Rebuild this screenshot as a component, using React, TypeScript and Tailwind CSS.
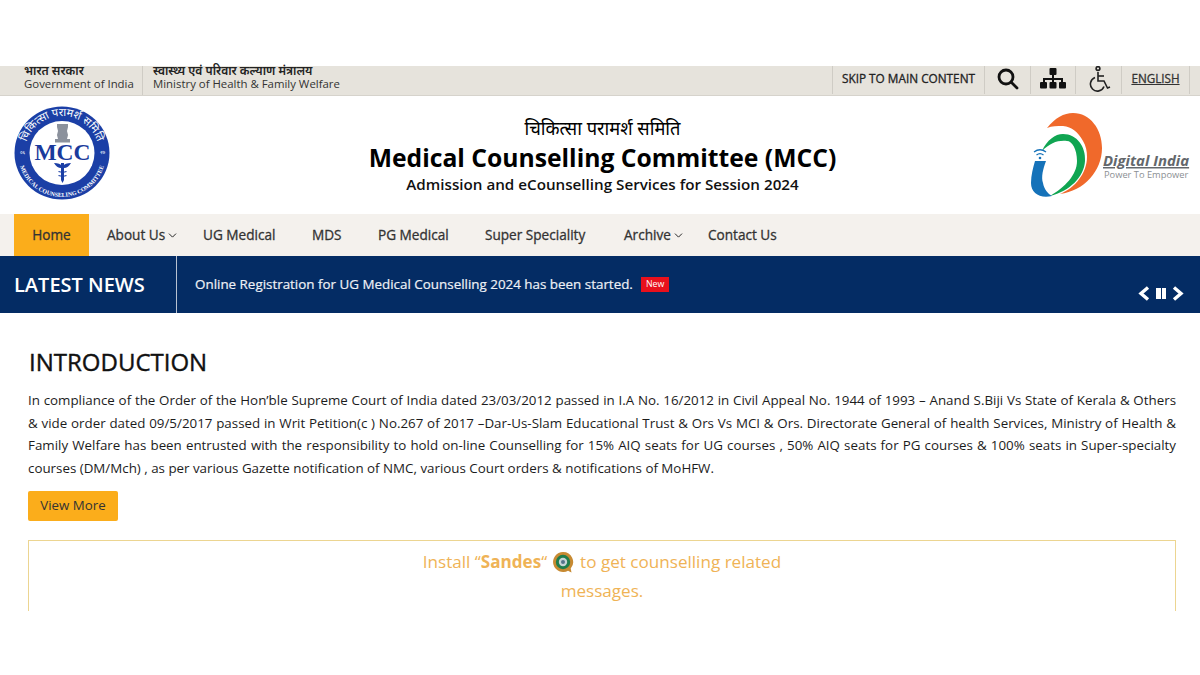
import { ChevronDown } from "lucide-react";

const navItems = [
  { label: "About Us", caret: true, cls: "ml-[18px] w-[96px]" },
  { label: "UG Medical", cls: "w-[109px]" },
  { label: "MDS", cls: "w-[66px]" },
  { label: "PG Medical", cls: "w-[107px]" },
  { label: "Super Speciality", cls: "w-[139px]" },
  { label: "Archive", caret: true, cls: "w-[84px]" },
  { label: "Contact Us", cls: "w-[80px]" },
];

function MccLogo() {
  return (
    <svg width="98" height="96" viewBox="0 0 98 96">
      <defs>
        <path id="mcc-top" d="M12 48 A37 37 0 0 1 86 48" />
        <path id="mcc-bottom" d="M5 48 A44 44 0 0 0 93 48" />
      </defs>
      <ellipse cx="49" cy="48" rx="47.500" ry="46.500" fill="#1b3fa6" />
      <ellipse cx="49" cy="48" rx="32.500" ry="32" fill="#fff" />
      <text fontSize="11" fill="#fff" fontFamily="'Noto Sans', 'Open Sans', sans-serif">
        <textPath href="#mcc-top" startOffset="50%" textAnchor="middle">
          चिकित्सा परामर्श समिति
        </textPath>
      </text>
      <text fontSize="6" fontWeight="700" fill="#fff" fontFamily="'Liberation Serif', serif">
        <textPath href="#mcc-bottom" startOffset="50%" textAnchor="middle">
          MEDICAL COUNSELING COMMITTEE
        </textPath>
      </text>
      <path d="M44 19h11v3l-1 4 1 4-1 4h3v3.500H42V34h3l-1-4 1-4-1-4z" fill="#8b919c" />
      <text x="49.500" y="54.500" textAnchor="middle" fontSize="23.500" fontWeight="700" fill="#1a3a9c" fontFamily="'Liberation Serif', serif">
        MCC
      </text>
      <path d="M48 58h3v17l-1.500 3-1.500-3z" fill="#1b3fa6" />
      <path d="M41 58c4 0 6.500 1 8.500 3 2-2 4.500-3 8.500-3-1.500 3-4.500 5-7 5l-1.500 1.500L48 63c-2.500 0-5.500-2-7-5z" fill="#1b3fa6" />
      <path d="M45.500 66.500c3 1 5.500 1 8 0M45.500 70.500c3 1 5.500 1 8 0" stroke="#1b3fa6" strokeWidth="1.200" fill="none" />
      <text x="9.500" y="49" textAnchor="middle" fontSize="5" fill="#fff" fontFamily="'Noto Sans', 'Open Sans', sans-serif">०६</text>
      <text x="89.500" y="49" textAnchor="middle" fontSize="5" fill="#fff" fontFamily="'Noto Sans', 'Open Sans', sans-serif">२७</text>
    </svg>
  );
}

function DigitalIndiaLogo() {
  return (
    <svg width="164" height="88" viewBox="0 0 164 88">
      <path d="M19 17C27 7 36 2 45 2c17 0 29 16 29 35 0 23-18 43-42 46 15-6 27-21 27-37 0-6-1-11-4-16-5-9-11-14-20-15-6 0-11 0-16 2z" fill="#f0692b" />
      <path d="M14 40c5-11 13-17 21-17 14 0 23 13 22 27-1 16-15 30-35 35 15-9 27-21 27-35 0-12-5-20-10-20-9-1-17 2-25 10z" fill="#10a552" />
      <path d="M7 50h11c-3 8-5 16-3 22 1 6 5 11 9 13C12 88 3 82 3 72c0-8 2-15 4-22z" fill="#1572b9" />
      <path d="M6 41c4-3 8-3 12 0M8.500 44c2.500-2 4.500-2 7 0" stroke="#1572b9" strokeWidth="1.300" fill="none" />
      <circle cx="12" cy="47" r="1.300" fill="#1572b9" />
      <text x="75" y="55" fontSize="14.900" fontWeight="700" fontStyle="italic" fill="#63676b" fontFamily="'Open Sans', sans-serif" textDecoration="underline">
        Digital India
      </text>
      <text x="76" y="67" fontSize="9.300" fill="#8b8f93" fontFamily="'Open Sans', sans-serif">
        Power To Empower
      </text>
    </svg>
  );
}

function SitemapIcon() {
  return (
    <svg width="26" height="21" viewBox="0 0 26 21" fill="#111">
      <rect x="9.500" y="0" width="7" height="7" rx="1" />
      <path d="M12 7h2v3h9v4h-2v-2h-7v2h-2v-2H5v2H3v-4h9z" />
      <rect x="0" y="14" width="7" height="6.500" rx="1" />
      <rect x="9.500" y="14" width="7" height="6.500" rx="1" />
      <rect x="19" y="14" width="7" height="6.500" rx="1" />
    </svg>
  );
}

function WheelchairIcon() {
  return (
    <svg width="24" height="26" viewBox="0 0 24 26" fill="none" stroke="#222" strokeWidth="1.600">
      <circle cx="11" cy="2.500" r="1.900" />
      <path d="M11 6v9h6l3.500 7 2.500-1" />
      <path d="M11 10h6" />
      <path d="M8 11.500a7 7 0 1 0 9 9" />
    </svg>
  );
}

function SandesIcon() {
  return (
    <svg width="22" height="23" viewBox="0 0 22 23" className="mr-[2px] inline-block align-[-6px]">
      <path d="M11 1a10 10 0 1 0 5 18.700l3.500 1.800-.8-4A10 10 0 0 0 11 1z" fill="#c78a32" />
      <circle cx="11" cy="11" r="7.200" fill="#1f7d4d" />
      <circle cx="11" cy="11" r="4.200" fill="#c6d4d6" />
      <circle cx="11" cy="11" r="2" fill="#54748c" />
    </svg>
  );
}

export default function App() {
  return (
    <div className="h-[675px] w-[1200px] overflow-hidden bg-white pt-[66px] font-['Open_Sans','Noto_Sans',sans-serif] text-[#222]">
      {/* gov strip */}
      <div className="flex h-[30px] items-stretch border-b border-[#d6d3cc] bg-[#e6e3dc] text-[11.400px] leading-[13px]">
        <div className="flex w-[143px] flex-col justify-center border-r border-[#cfccc5] pb-[7px] pl-[24px]">
          <span className="text-[12px] font-semibold text-[#222]">भारत सरकार</span>
          <span className="text-[#333]">Government of India</span>
        </div>
        <div className="flex flex-col justify-center pb-[7px] pl-[10px]">
          <span className="text-[12px] font-semibold text-[#222]">स्वास्थ्य एवं परिवार कल्याण मंत्रालय</span>
          <span className="text-[#333]">Ministry of Health &amp; Family Welfare</span>
        </div>
        <div className="ml-auto flex items-stretch pb-[1px]">
          <div className="flex w-[153px] items-center justify-center border-x border-[#cfccc5] pb-[3px] text-[11.800px] text-[#222] [-webkit-text-stroke:0.3px_#222]">
            SKIP TO MAIN CONTENT
          </div>
          <div className="flex w-[46px] items-center justify-center border-r border-[#cfccc5] pb-[3px]">
            <svg width="22" height="22" viewBox="0 0 22 22" fill="none" stroke="#111" strokeWidth="2.800" strokeLinecap="round">
              <circle cx="9" cy="9" r="7" />
              <path d="M14.500 14.500 20 20" />
            </svg>
          </div>
          <div className="flex w-[45px] items-center justify-center border-r border-[#cfccc5] pb-[3px]">
            <SitemapIcon />
          </div>
          <div className="flex w-[46px] items-center justify-center border-r border-[#cfccc5] pb-[3px]">
            <WheelchairIcon />
          </div>
          <div className="flex w-[68px] items-center justify-center border-r border-[#cfccc5] pb-[3px] text-[11.700px] text-[#333] underline [-webkit-text-stroke:0.3px_#333]">
            ENGLISH
          </div>
          <div className="w-[10px]" />
        </div>
      </div>

      {/* header */}
      <div className="flex h-[118px] items-center justify-between bg-white pr-[8px] pl-[13px]">
        <div className="pb-[4px]">
          <MccLogo />
        </div>
        <div className="flex flex-col items-center pl-[66px] text-black">
          <div className="text-[18.300px] leading-[26px]">चिकित्सा परामर्श समिति</div>
          <div className="mt-[2px] text-[24.700px] leading-[30px] font-bold">Medical Counselling Committee (MCC)</div>
          <div className="mt-[1px] pb-[1px] text-[15.200px] leading-[20px] font-semibold text-[#111]">
            Admission and eCounselling Services for Session 2024
          </div>
        </div>
        <DigitalIndiaLogo />
      </div>

      {/* nav */}
      <div className="flex h-[42px] items-stretch bg-[#f4f1ed] pl-[14px] text-[13.600px] whitespace-nowrap text-[#333] [-webkit-text-stroke:0.3px_#333]">
        <div className="flex w-[75px] items-center justify-center bg-[#fbad1b]">Home</div>
        {navItems.map((item) => (
          <div key={item.label} className={`flex items-center ${item.cls}`}>
            {item.label}
            {item.caret && <ChevronDown size={13} strokeWidth={1.800} className="mt-[1px] ml-[1px] text-[#222]" />}
          </div>
        ))}
      </div>

      {/* latest news */}
      <div className="flex h-[57px] bg-[#042c64] text-white">
        <div className="flex w-[177px] items-center border-r border-[#b8c2d2] pl-[14px] text-[20px] font-semibold">
          LATEST NEWS
        </div>
        <div className="flex items-center pb-[1px] pl-[18px] text-[13.400px] text-[#eef1f6] [-webkit-text-stroke:0.2px_#eef1f6]">
          Online Registration for UG Medical Counselling 2024 has been started.
          <span className="ml-[8px] bg-[#e8101c] px-[5px] py-[1px] text-[8.800px] leading-[13px] text-white [-webkit-text-stroke:0]">New</span>
        </div>
        <div className="mt-[30px] mr-[16px] ml-auto flex h-[15px] items-center gap-[6px]">
          <svg width="12" height="15" viewBox="0 0 12 15" fill="none" stroke="#fff" strokeWidth="3.400">
            <path d="M10 1.500 3 7.500 10 13.500" />
          </svg>
          <div className="flex gap-[1px]">
            <span className="h-[11px] w-[4.500px] bg-white" />
            <span className="h-[11px] w-[4.500px] bg-white" />
          </div>
          <svg width="12" height="15" viewBox="0 0 12 15" fill="none" stroke="#fff" strokeWidth="3.400">
            <path d="M2 1.500 9 7.500 2 13.500" />
          </svg>
        </div>
      </div>

      {/* intro */}
      <div className="pr-[24px] pl-[28px]">
        <h1 className="mt-[32px] pl-[1px] text-[24px] leading-[34px] text-[#111] [-webkit-text-stroke:0.4px_#111]">INTRODUCTION</h1>
        <p className="mt-[10px] text-justify text-[13.350px] leading-[22.700px] text-[#1c1c1c]">
          In compliance of the Order of the Hon’ble Supreme Court of India dated 23/03/2012 passed in I.A No. 16/2012 in Civil Appeal No. 1944 of 1993 – Anand S.Biji Vs State of Kerala &amp; Others &amp;{"\u00a0"}vide order dated 09/5/2017 passed in Writ Petition(c ) No.267 of 2017 –Dar-Us-Slam Educational Trust &amp; Ors Vs MCI &amp; Ors. Directorate General of health Services, Ministry of Health &amp; Family Welfare has been entrusted with the responsibility to hold on-line Counselling for 15% AIQ seats for UG courses , 50% AIQ seats for PG courses &amp; 100% seats in Super-specialty courses (DM/Mch) , as per various Gazette notification of NMC, various Court orders &amp; notifications of MoHFW.
        </p>
        <button className="mt-[11px] flex h-[30px] w-[90px] items-center justify-center rounded-[2px] bg-[#fbad1b] text-[13.300px] text-[#333]">
          View More
        </button>
        <div className="mt-[19px] h-[71px] border-x border-t border-[#ecd591] pt-[6px]">
          <div className="mx-auto w-[400px] text-center text-[17.100px] leading-[29px] text-[#efb356]">
            <div className="whitespace-nowrap">
              Install “<b className="font-bold">Sandes</b>“ <SandesIcon /> to get counselling related
            </div>
            <div>messages.</div>
          </div>
        </div>
      </div>
    </div>
  );
}
